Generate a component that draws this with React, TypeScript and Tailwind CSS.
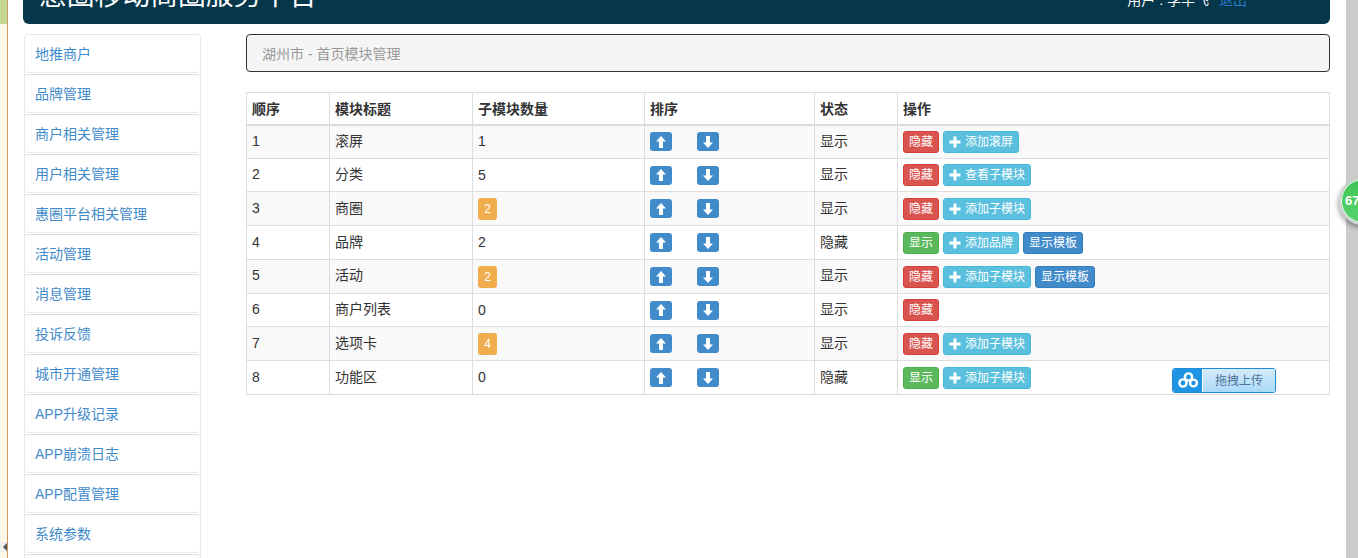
import React from 'react';

const MENU = ['地推商户', '品牌管理', '商户相关管理', '用户相关管理', '惠圈平台相关管理', '活动管理', '消息管理', '投诉反馈', '城市开通管理', 'APP升级记录', 'APP崩溃日志', 'APP配置管理', '系统参数', ''];

type Row = { n: number; title: string; count: number; badge?: boolean; status: string; add?: string; tpl?: boolean };

const ROWS: Row[] = [
  { n: 1, title: '滚屏', count: 1, status: '显示', add: '添加滚屏' },
  { n: 2, title: '分类', count: 5, status: '显示', add: '查看子模块' },
  { n: 3, title: '商圈', count: 2, badge: true, status: '显示', add: '添加子模块' },
  { n: 4, title: '品牌', count: 2, status: '隐藏', add: '添加品牌', tpl: true },
  { n: 5, title: '活动', count: 2, badge: true, status: '显示', add: '添加子模块', tpl: true },
  { n: 6, title: '商户列表', count: 0, status: '显示' },
  { n: 7, title: '选项卡', count: 4, badge: true, status: '显示', add: '添加子模块' },
  { n: 8, title: '功能区', count: 0, status: '隐藏', add: '添加子模块' },
];

const HEIGHTS = ['h-[34px]', 'h-[33px]', 'h-[34px]', 'h-[34px]', 'h-[34px]', 'h-[33px]', 'h-[34px]', 'h-[34px]'];

const ArrowBtn = ({ down }: { down?: boolean }) => (
  <span className="flex h-[19px] w-[22px] items-center justify-center rounded-[3px] bg-[#428bca]">
    <svg width="10" height="12" viewBox="0 0 10 12" className={down ? 'rotate-180' : ''}>
      <path d="M5 0 L10 5.6 H7 V12 H3 V5.6 H0 Z" fill="#fff" />
    </svg>
  </span>
);

const Btn = ({ color, children }: { color: string; children: React.ReactNode }) => (
  <span className={`inline-flex h-[22px] items-center rounded-[3px] border px-[5px] text-[12px] leading-none text-white ${color}`}>{children}</span>
);

const Plus = () => (
  <svg width="12" height="12" viewBox="0 0 12 12" className="mr-[4px]">
    <path d="M4.5 0.5 H7.5 V4.5 H11.5 V7.5 H7.5 V11.5 H4.5 V7.5 H0.5 V4.5 H4.5 Z" fill="#fff" />
  </svg>
);

export default function App() {
  return (
    <div className="flex h-[558px] w-[1358px] overflow-hidden bg-white text-[14px] text-[#333] font-['Liberation_Sans','Noto_Sans_CJK_SC',sans-serif]">
      {/* sliver of the window behind */}
      <div className="flex w-[8px] shrink-0 flex-col border-r border-[#c9995f] bg-[#fdf7e6]">
        <div className="h-[24px] bg-[#c5d88f]" />
        <div className="h-[518px]" />
        <div className="flex h-[10px] items-center justify-end bg-[#eeeeee]">
          <span className="h-0 w-0 border-y-[4px] border-r-[4px] border-y-transparent border-r-[#555]" />
        </div>
      </div>

      <div className="relative w-[1338px] shrink-0 pl-[15px] pr-[16px]">
        <header className="flex h-[24px] items-start justify-between overflow-hidden rounded-b-[6px] bg-[#063649] pl-[16px] text-white">
          <div className="mt-[-18px] whitespace-nowrap text-[27.8px] leading-[28px]">惠圈移动商圈服务平台</div>
          <div className="mr-[83px] mt-[-10px] whitespace-nowrap text-[14px] leading-[20px]">
            用户 : 李丰飞<a className="ml-[10px] text-[#2a7ac9]">退出</a>
          </div>
        </header>

        <div className="mt-[10px] flex items-start">
          <nav className="ml-[1px] w-[177px] shrink-0 rounded-t-[4px] border border-[#e8e8e8]">
            {MENU.map((m, i) => (
              <div key={i} className={`flex items-center rounded-[4px] border-b border-[#eeeeee] pl-[10px] pt-[2px] text-[#428bca] ${i > 0 ? 'mt-[1px] h-[39px] border-t border-t-[#dddddd]' : 'h-[38px]'}`}>{m}</div>
            ))}
          </nav>

          <main className="ml-[45px] flex-1">
            <div className="flex h-[38px] items-center rounded-[4px] border border-[#333] bg-[#f5f5f5] pl-[15px] pt-[2px] text-[#999]">湖州市 - 首页模块管理</div>

            <table className="mt-[20px] w-[1084px] table-fixed border-collapse">
              <colgroup>
                <col className="w-[83px]" />
                <col className="w-[143px]" />
                <col className="w-[172px]" />
                <col className="w-[170px]" />
                <col className="w-[83px]" />
                <col />
              </colgroup>
              <thead>
                <tr className="h-[32px]">
                  {['顺序', '模块标题', '子模块数量', '排序', '状态', '操作'].map(h => (
                    <th key={h} className="border border-b-2 border-[#ddd] px-[5px] pt-[2px] text-left font-bold">{h}</th>
                  ))}
                </tr>
              </thead>
              <tbody>
                {ROWS.map((r, i) => {
                  // rows 2, 5 and 6 sit a pixel higher in the original
                  const cell = `border border-[#ddd] px-[5px] ${[2, 5, 6].includes(r.n) ? 'pb-[2px]' : ''}`;
                  return (
                    <tr key={r.n} className={`${HEIGHTS[i]} ${i % 2 === 0 ? 'bg-[#f9f9f9]' : 'bg-white'}`}>
                      <td className={cell}>{r.n}</td>
                      <td className={cell}>{r.title}</td>
                      <td className="border border-[#ddd] px-[5px]">
                        {r.badge ? (
                          <span className="inline-flex h-[22px] w-[19px] items-center justify-center rounded-[3px] bg-[#f0ad4e] text-[12px] text-white">{r.count}</span>
                        ) : r.count}
                      </td>
                      <td className="border border-[#ddd] px-[5px]">
                        <div className="flex gap-[25px]">
                          <ArrowBtn />
                          <ArrowBtn down />
                        </div>
                      </td>
                      <td className={cell}>{r.status}</td>
                      <td className="border border-[#ddd] px-[5px]">
                        <div className="flex gap-[4px]">
                          {r.status === '显示'
                            ? <Btn color="border-[#d43f3a] bg-[#d9534f]">隐藏</Btn>
                            : <Btn color="border-[#4cae4c] bg-[#5cb85c]">显示</Btn>}
                          {r.add && <Btn color="border-[#46b8da] bg-[#5bc0de]"><Plus />{r.add}</Btn>}
                          {r.tpl && <Btn color="border-[#357ebd] bg-[#428bca]">显示模板</Btn>}
                        </div>
                      </td>
                    </tr>
                  );
                })}
              </tbody>
            </table>
          </main>
        </div>

        {/* upload widget floats over the last row */}
        <div className="absolute left-[1164px] top-[368px] flex h-[25px] w-[104px] overflow-hidden rounded-[3px] border border-[#1f8ad6]">
          <div className="flex w-[29px] items-center justify-center bg-[#1e94e2]">
            <svg width="20" height="17" viewBox="0 0 20 17">
              <g fill="none" stroke="#fff" strokeWidth="2.4">
                <circle cx="10.5" cy="5" r="3.6" />
                <circle cx="5" cy="11" r="3.6" />
                <circle cx="15.5" cy="11" r="3.4" />
              </g>
            </svg>
          </div>
          <div className="flex flex-1 items-center justify-center border-l border-white bg-gradient-to-b from-[#d5ebfa] to-[#a9d9f7] text-[12px] text-[#4f7396]">拖拽上传</div>
        </div>
      </div>

      <div className="relative w-[12px] shrink-0 bg-[#cccccc]">
        {/* floating speed ball, cut off by the window edge */}
        <div className="absolute left-[-7px] top-[177px] flex h-[48px] w-[48px] items-center rounded-full border-[2px] border-[#d0d0d0] bg-gradient-to-b from-[#3fc356] to-[#56d46c] pl-[4px] text-[13px] font-bold text-white shadow-[-1px_3px_5px_rgba(0,0,0,0.35)] outline outline-1 -outline-offset-3 outline-white">67</div>
      </div>
    </div>
  );
}
